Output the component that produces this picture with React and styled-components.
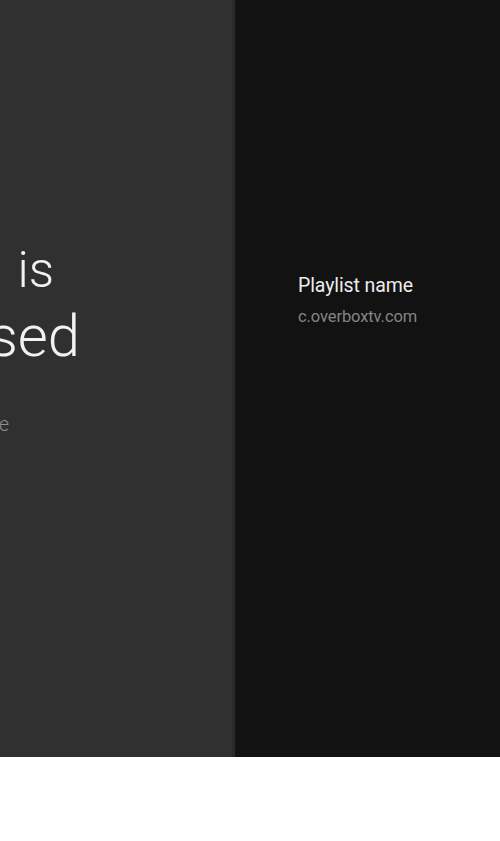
import styled, { createGlobalStyle } from 'styled-components';

const GlobalStyle = createGlobalStyle`
  html, body {
    margin: 0;
    padding: 0;
    background: #ffffff;
    font-family: Roboto, "Liberation Sans", sans-serif;
  }
`;

export default function App() {
  return (
    <>
      <GlobalStyle />
      <Screen>
        <InfoPane>
          <Message>
            <TitleLine $size={50} $inset={26} $gap={12}>Playlist is</TitleLine>
            <TitleLine $size={58} $inset={0} $lead={72}>being used</TitleLine>
            <Hint $inset={71}>Please choose another profile</Hint>
          </Message>
        </InfoPane>
        <ListPane>
          <PlaylistItem>
            <ItemName>Playlist name</ItemName>
            <ItemUrl>c.overboxtv.com</ItemUrl>
          </PlaylistItem>
        </ListPane>
      </Screen>
    </>
  );
}

const Screen = styled.div`
  display: flex;
  height: 757px;
  width: 100%;
  overflow: hidden;
`;

const InfoPane = styled.section`
  width: 232px;
  flex-shrink: 0;
  background: #303030;
  border-right: 3px solid #2a2a2a;
  overflow: hidden;
  padding-top: 240px;
  box-sizing: content-box;
`;

/* the message is wider than the pane and runs off its left edge */
const Message = styled.div`
  display: flex;
  flex-direction: column;
  align-items: flex-end;
  width: 600px;
  margin-left: -520px;
  white-space: nowrap;
`;

const TitleLine = styled.div`
  font-weight: 300;
  font-size: ${(p) => p.$size}px;
  line-height: ${(p) => p.$lead || Math.round(p.$size * 1.2)}px;
  word-spacing: ${(p) => p.$gap || 0}px;
  color: #f2f2f2;
  margin-right: ${(p) => p.$inset}px;
`;

const Hint = styled.div`
  margin-top: 40px;
  font-size: 20px;
  line-height: 24px;
  font-weight: 300;
  color: #8c8c8c;
  margin-right: ${(p) => p.$inset}px;
`;

const ListPane = styled.section`
  flex: 1;
  background: #121212;
  padding: 274px 0 0 63px;
`;

const PlaylistItem = styled.div`
  display: flex;
  flex-direction: column;
  gap: 9px;
`;

const ItemName = styled.div`
  font-size: 19.5px;
  line-height: 24px;
  letter-spacing: -0.1px;
  color: #ececec;
`;

const ItemUrl = styled.div`
  font-size: 16.5px;
  line-height: 20px;
  letter-spacing: -0.1px;
  color: #858585;
`;
